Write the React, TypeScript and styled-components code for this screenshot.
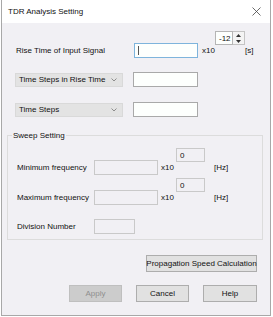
import React from "react";
import styled, { createGlobalStyle } from "styled-components";

const GlobalStyle = createGlobalStyle`
  html, body {
    margin: 0;
    padding: 0;
    background: #ffffff;
  }
  body {
    font-family: "Liberation Sans", Arial, sans-serif;
    font-size: 8px;
    color: #111;
  }
`;

const Window = styled.div`
  box-sizing: border-box;
  width: 270px;
  height: 316px;
  margin-left: 1px;
  border: 1px solid #a8a8a8;
  border-top: none;
  background: #f1f0f4;
  display: flex;
  flex-direction: column;
`;

const TitleBar = styled.div`
  height: 23px;
  background: #ffffff;
  display: flex;
  align-items: center;
  justify-content: space-between;
  padding: 0 9px 0 6px;
  font-size: 8px;
`;

const Content = styled.div`
  display: flex;
  flex-direction: column;
  padding: 8px 0 0 13px;
`;

const ExpGrid = styled.div<{ $cols: string; $top?: number }>`
  display: grid;
  grid-template-columns: ${(p) => p.$cols};
  grid-template-rows: 12px auto;
  align-items: center;
  margin-top: ${(p) => p.$top ?? 0}px;
`;

const Cell = styled.div<{ $col: number; $pad?: number }>`
  grid-row: 2;
  grid-column: ${(p) => p.$col};
  padding-left: ${(p) => p.$pad ?? 0}px;
  white-space: nowrap;
`;

const Field = styled.div<{ $w: number; $focus?: boolean; $disabled?: boolean }>`
  box-sizing: border-box;
  width: ${(p) => p.$w}px;
  height: 15px;
  border: 1px solid
    ${(p) => (p.$focus ? "#7eb4dc" : p.$disabled ? "#c9c9c9" : "#a9a9a9")};
  background: ${(p) => (p.$disabled ? "#f1f0f4" : "#fdfffd")};
  display: flex;
  align-items: center;
  padding-left: 3px;
`;

const Caret = styled.div`
  width: 1px;
  height: 9px;
  background: #555;
`;

const Exponent = styled.div`
  grid-row: 1;
  grid-column: 4;
  align-self: start;
  display: flex;
  height: 14px;
`;

const ExpBox = styled.div<{ $w: number; $disabled?: boolean }>`
  box-sizing: border-box;
  width: ${(p) => p.$w}px;
  height: 14px;
  border: 1px solid ${(p) => (p.$disabled ? "#c9c9c9" : "#b5b5b5")};
  background: ${(p) => (p.$disabled ? "#f1f0f4" : "#fdfffd")};
  display: flex;
  align-items: center;
  padding-left: 3px;
`;

const SpinButtons = styled.div`
  box-sizing: border-box;
  width: 12px;
  height: 14px;
  border: 1px solid #c4c4c4;
  border-left: none;
  background: #f4f4f4;
  display: flex;
  flex-direction: column;
  align-items: center;
  justify-content: space-around;
`;

const ComboRow = styled.div<{ $top: number }>`
  display: flex;
  align-items: center;
  gap: 10px;
  margin-top: ${(p) => p.$top}px;
`;

const Combo = styled.div`
  box-sizing: border-box;
  width: 108px;
  height: 14px;
  background: #e3e3e3;
  border: 1px solid #d9d9d9;
  display: flex;
  align-items: center;
  justify-content: space-between;
  padding: 0 5px 0 3px;
`;

const GroupBox = styled.fieldset`
  box-sizing: border-box;
  width: 256px;
  height: 109px;
  margin: 14px 0 0 -8px;
  padding: 0 0 0 9px;
  border: 1px solid #dcdcdc;
  display: flex;
  flex-direction: column;
`;

const Legend = styled.legend`
  padding: 0 1px;
  margin-left: -5px;
`;

const DivRow = styled.div`
  display: flex;
  align-items: center;
  margin-top: 14px;
`;

const DivLabel = styled.span`
  flex: 0 0 77px;
`;

const Button = styled.div<{ $w: number; $disabled?: boolean }>`
  box-sizing: border-box;
  width: ${(p) => p.$w}px;
  height: 17px;
  background: ${(p) => (p.$disabled ? "#cccccc" : "#e1e1e1")};
  border: 1px solid ${(p) => (p.$disabled ? "#bfbfbf" : "#adadad")};
  color: ${(p) => (p.$disabled ? "#8f8f8f" : "#111")};
  display: flex;
  align-items: center;
  justify-content: center;
  white-space: nowrap;
`;

const PropRow = styled.div`
  display: flex;
  justify-content: flex-end;
  padding-right: 13px;
  margin-top: 15px;
`;

const ButtonRow = styled.div`
  display: flex;
  justify-content: flex-end;
  gap: 14px;
  padding-right: 13px;
  margin-top: 13px;
`;

const Chevron = () => (
  <svg width="6" height="4" viewBox="0 0 6 4">
    <path d="M0.5 0.5 L3 3 L5.5 0.5" fill="none" stroke="#777" strokeWidth="0.8" />
  </svg>
);

const Arrow = ({ up }: { up?: boolean }) => (
  <svg width="5" height="3" viewBox="0 0 5 3">
    <path d={up ? "M0 3 L2.5 0 L5 3 Z" : "M0 0 L2.5 3 L5 0 Z"} fill="#333" />
  </svg>
);

const CloseIcon = () => (
  <svg width="9" height="9" viewBox="0 0 9 9">
    <path d="M0.5 0.5 L8.5 8.5 M8.5 0.5 L0.5 8.5" stroke="#444" strokeWidth="0.8" />
  </svg>
);

function FreqRow({ label, top }: { label: string; top: number }) {
  return (
    <ExpGrid $cols="77px 64px 18px 38px auto" $top={top}>
      <Cell $col={1}>{label}</Cell>
      <Cell $col={2}>
        <Field $w={64} $disabled />
      </Cell>
      <Cell $col={3} $pad={3}>x10</Cell>
      <Exponent>
        <ExpBox $w={29} $disabled>0</ExpBox>
      </Exponent>
      <Cell $col={5}>[Hz]</Cell>
    </ExpGrid>
  );
}

export default function App() {
  return (
    <>
      <GlobalStyle />
      <Window>
        <TitleBar>
          <span>TDR Analysis Setting</span>
          <CloseIcon />
        </TitleBar>
        <Content>
          <ExpGrid $cols="119px 64px 17px 30px auto">
            <Cell $col={1} $pad={1}>Rise Time of Input Signal</Cell>
            <Cell $col={2}>
              <Field $w={64} $focus>
                <Caret />
              </Field>
            </Cell>
            <Cell $col={3} $pad={4}>x10</Cell>
            <Exponent>
              <ExpBox $w={18}>-12</ExpBox>
              <SpinButtons>
                <Arrow up />
                <Arrow />
              </SpinButtons>
            </Exponent>
            <Cell $col={5}>[s]</Cell>
          </ExpGrid>
          <ComboRow $top={14}>
            <Combo>
              <span>Time Steps in Rise Time</span>
              <Chevron />
            </Combo>
            <Field $w={65} />
          </ComboRow>
          <ComboRow $top={15}>
            <Combo>
              <span>Time Steps</span>
              <Chevron />
            </Combo>
            <Field $w={65} />
          </ComboRow>
          <GroupBox>
            <Legend>Sweep Setting</Legend>
            <FreqRow label="Minimum frequency" top={8} />
            <FreqRow label="Maximum frequency" top={3} />
            <DivRow>
              <DivLabel>Division Number</DivLabel>
              <Field $w={41} $disabled />
            </DivRow>
          </GroupBox>
        </Content>
        <PropRow>
          <Button $w={111}>Propagation Speed Calculation</Button>
        </PropRow>
        <ButtonRow>
          <Button $w={53} $disabled>Apply</Button>
          <Button $w={53}>Cancel</Button>
          <Button $w={54}>Help</Button>
        </ButtonRow>
      </Window>
    </>
  );
}
